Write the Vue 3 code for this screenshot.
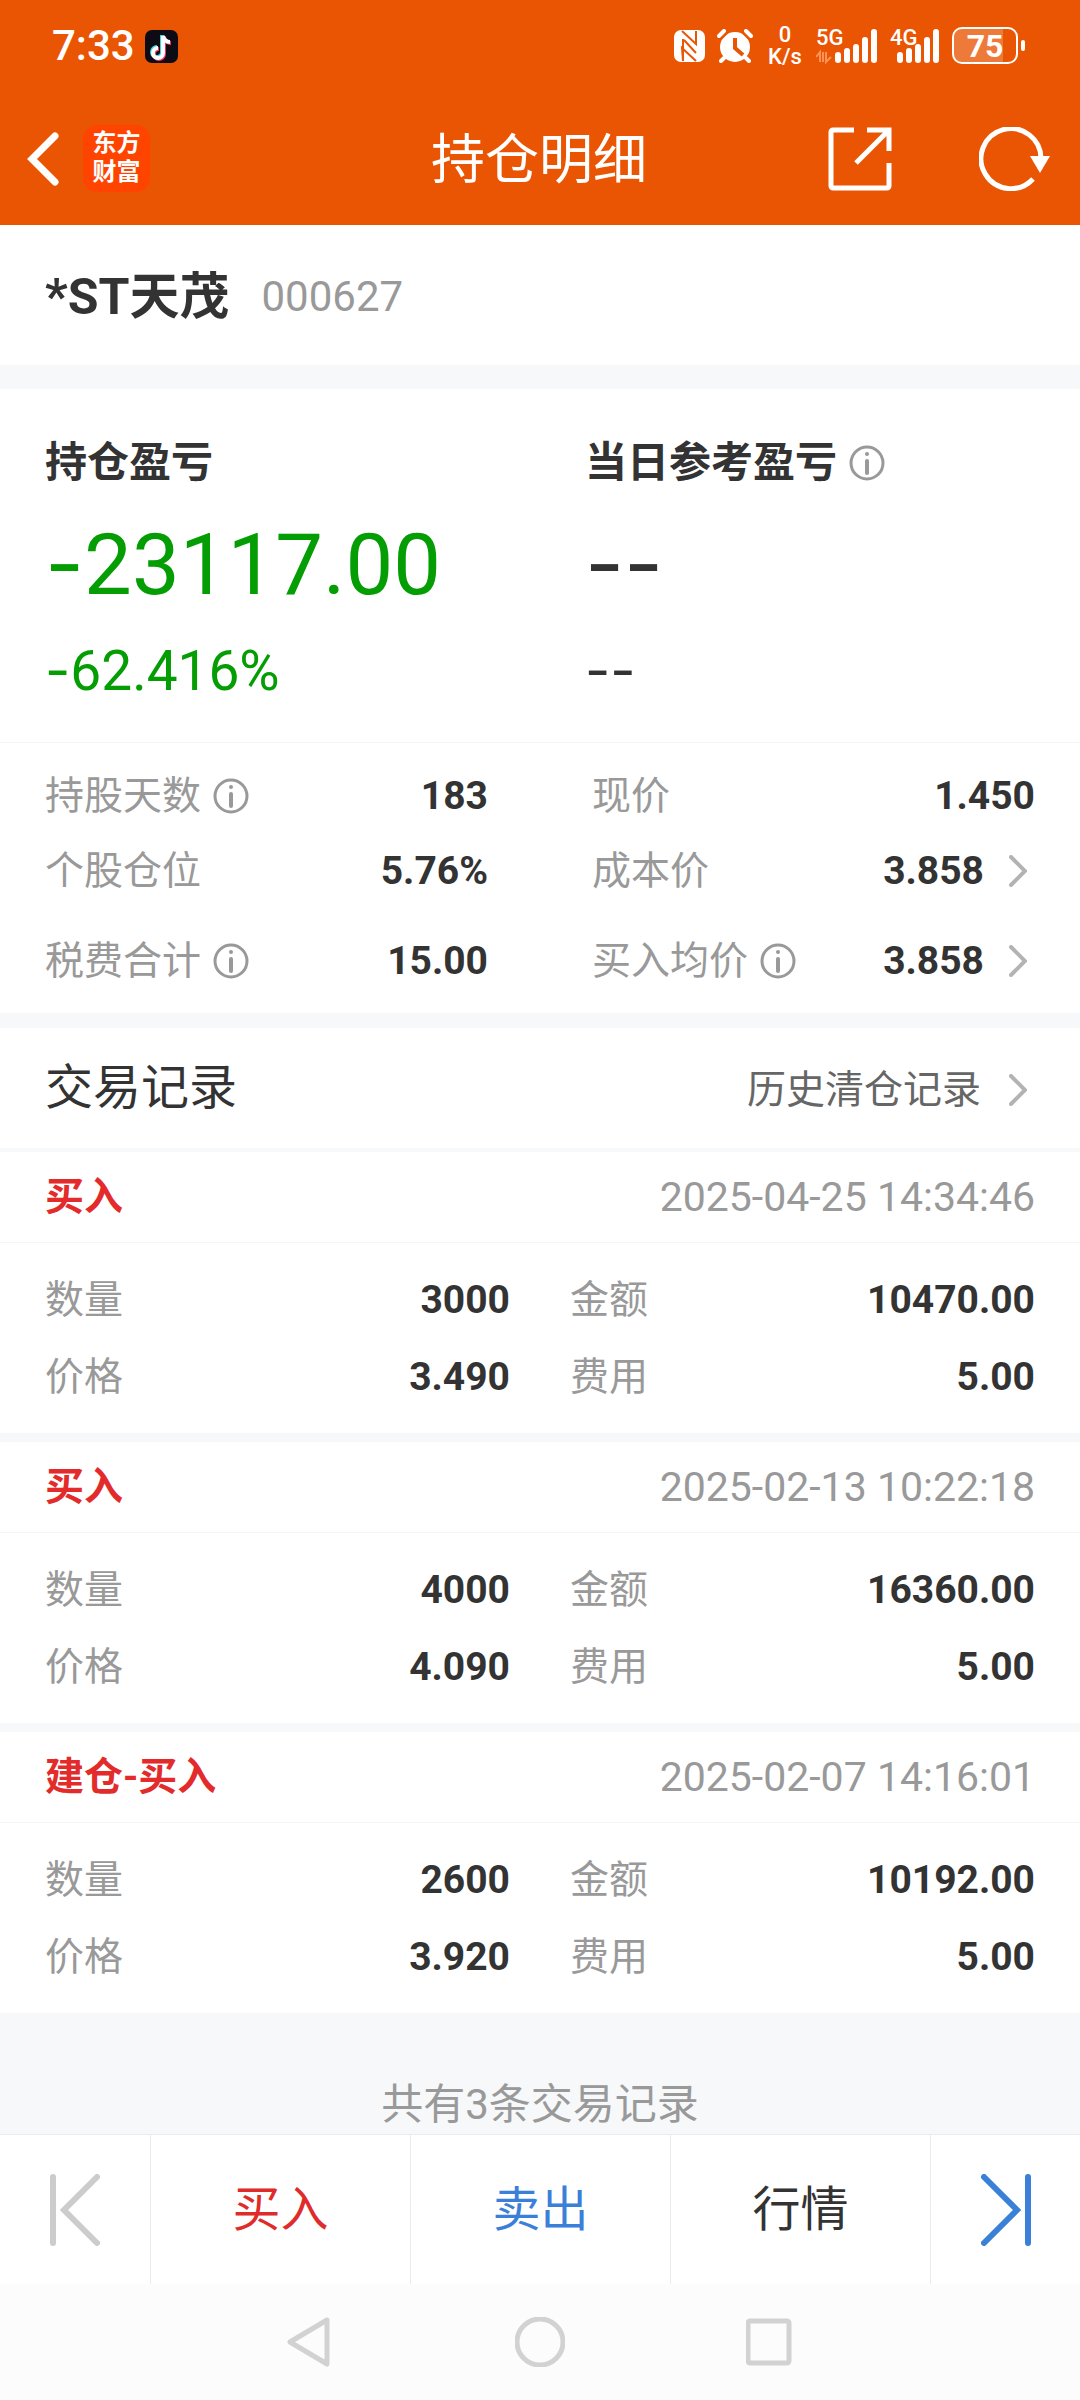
<script setup>
import { ref } from "vue";

const stock = { name: "*ST天茂", code: "000627" };

const leftStats = [
  { label: "持股天数", value: "183", info: true },
  { label: "个股仓位", value: "5.76%" },
  { label: "税费合计", value: "15.00", info: true },
];
const rightStats = [
  { label: "现价", value: "1.450" },
  { label: "成本价", value: "3.858", arrow: true },
  { label: "买入均价", value: "3.858", info: true, arrow: true },
];

const records = ref([
  { type: "买入", time: "2025-04-25 14:34:46", count: "3000", amount: "10470.00", price: "3.490", fee: "5.00" },
  { type: "买入", time: "2025-02-13 10:22:18", count: "4000", amount: "16360.00", price: "4.090", fee: "5.00" },
  { type: "建仓-买入", time: "2025-02-07 14:16:01", count: "2600", amount: "10192.00", price: "3.920", fee: "5.00" },
]);

// 信号格的顶部位置
const bars = [23, 19, 15, 8, 0];
</script>

<template>
  <div class="page">
    <header class="top">
      <div class="status">
        <div class="status-left">
          <span class="time">7:33</span>
          <svg class="tiktok" viewBox="0 0 33 33" aria-hidden="true">
            <rect width="33" height="33" rx="7" fill="#0d0b14" />
            <g fill="none" stroke-width="4">
              <path d="M17 5v17a5 5 0 1 1-5-5M17 6c1 4 3 6 7 6" stroke="#35d6dc" />
              <path d="M19 7v17a5 5 0 1 1-5-5M19 7c1 4 3 6 7 6" stroke="#f0335a" />
              <path d="M18 6v17a5 5 0 1 1-5-5M18 6c1 4 3 6 7 6" stroke="#fff" />
            </g>
          </svg>
        </div>
        <div class="status-right">
          <svg class="nfc" viewBox="0 0 31 32" aria-hidden="true">
            <rect width="31" height="32" rx="7" fill="#fff" />
            <path d="M8 1l14 13V1M10 10l12 13M9 9v22l-1-13 14 13" fill="none" stroke="#ea5503" stroke-width="2" />
          </svg>
          <svg class="alarm" viewBox="0 0 36 34" aria-hidden="true">
            <circle cx="18" cy="18" r="15" fill="#fff" />
            <path d="M2 7l5-5M34 7l-5-5M7 29l-3 3M29 29l3 3" fill="none" stroke="#fff" stroke-width="4" stroke-linecap="round" />
            <path d="M4 10l7-7M32 10l-7-7" fill="none" stroke="#ea5503" stroke-width="2" />
            <path d="M18 9v10l8 7" fill="none" stroke="#ea5503" stroke-width="4" />
          </svg>
          <div class="speed"><span>0</span><span>K/s</span></div>
          <svg class="signal first" viewBox="0 -8 62 50">
            <text x="0" y="16">5G</text>
            <path d="M4 33V23l-4 5M7 23v10M10 23v10l5-5" fill="none" stroke="#ff9257" stroke-width="2" />
            <rect v-for="(y, i) in bars" :key="i" :x="19 + i * 9" :y="y" width="6" :height="34 - y" rx="3" />
          </svg>
          <svg class="signal" viewBox="0 -8 50 50">
            <text x="0" y="16">4G</text>
            <rect v-for="(y, i) in bars" :key="i" :x="7 + i * 9" :y="y" width="6" :height="34 - y" rx="3" />
          </svg>
          <svg class="battery" viewBox="0 0 74 38">
            <path d="M10 2H51V36H10a8 8 0 0 1-8-8V10a8 8 0 0 1 8-8z" fill="#fff" opacity=".22" />
            <rect x="1" y="1" width="64" height="35" rx="9" fill="none" stroke="#fff" stroke-width="2" />
            <rect x="69" y="13" width="4" height="11" rx="2" fill="#fff" />
            <text x="33" y="30">75</text>
          </svg>
        </div>
      </div>
      <nav class="titlebar">
        <div class="nav-left">
          <button class="icon-btn" aria-label="返回">
            <svg class="back" viewBox="0 0 32 54"><path d="M28 4L5 27l23 23" /></svg>
          </button>
          <div class="logo">东方<br />财富</div>
        </div>
        <h1>持仓明细</h1>
        <div class="nav-right">
          <button class="icon-btn" aria-label="分享">
            <svg class="share" viewBox="0 0 64 64">
              <path d="M26 3H5a2 2 0 0 0-2 2V59a2 2 0 0 0 2 2H59a2 2 0 0 0 2-2V36M39 3H61V24M61 3L28 36" />
            </svg>
          </button>
          <button class="icon-btn" aria-label="刷新">
            <svg class="refresh" viewBox="0 0 72 64">
              <path d="M62 32A30 30 0 1 0 54 52" />
              <path class="head" d="M51 29H71L61 46z" />
            </svg>
          </button>
        </div>
      </nav>
    </header>

    <main>
      <section class="stock">
        <h2>{{ stock.name }}</h2>
        <span class="code">{{ stock.code }}</span>
      </section>

      <section class="profit">
        <div class="profit-col">
          <h3>持仓盈亏</h3>
          <p class="big down"><span class="dash">-</span>23117.00</p>
          <p class="small down"><span class="dash">-</span>62.416%</p>
        </div>
        <div class="profit-col">
          <h3>
            当日参考盈亏
            <svg class="info" viewBox="0 0 36 36">
              <circle cx="18" cy="18" r="16" />
              <path d="M18 16v12" /><path d="M18 9v0" />
            </svg>
          </h3>
          <p class="big"><span class="dash">--</span></p>
          <p class="small"><span class="dash">--</span></p>
        </div>
      </section>

      <section class="stats">
        <dl v-for="(list, n) in [leftStats, rightStats]" :key="n">
          <div v-for="item in list" :key="item.label" class="row">
            <dt>
              {{ item.label }}
              <svg v-if="item.info" class="info" viewBox="0 0 36 36">
                <circle cx="18" cy="18" r="16" />
                <path d="M18 16v12" /><path d="M18 9v0" />
              </svg>
            </dt>
            <dd>
              {{ item.value }}
              <svg v-if="item.arrow" class="arrow" viewBox="0 0 18 32"><path d="M2 2l14 14L2 30" /></svg>
            </dd>
          </div>
        </dl>
      </section>

      <section class="record-title">
        <h2>交易记录</h2>
        <a href="#">
          历史清仓记录
          <svg class="arrow" viewBox="0 0 18 32"><path d="M2 2l14 14L2 30" /></svg>
        </a>
      </section>

      <article v-for="r in records" :key="r.time" class="record">
        <div class="record-head">
          <strong>{{ r.type }}</strong>
          <time>{{ r.time }}</time>
        </div>
        <dl class="record-body">
          <div class="row"><dt>数量</dt><dd>{{ r.count }}</dd></div>
          <div class="row"><dt>金额</dt><dd>{{ r.amount }}</dd></div>
          <div class="row"><dt>价格</dt><dd>{{ r.price }}</dd></div>
          <div class="row"><dt>费用</dt><dd>{{ r.fee }}</dd></div>
        </dl>
      </article>

      <p class="total">共有{{ records.length }}条交易记录</p>
    </main>

    <footer>
      <div class="actions">
        <button class="prev" aria-label="上一个" disabled>
          <svg viewBox="0 0 50 72"><path d="M3 3v66M47 3L14 36l33 33" /></svg>
        </button>
        <button class="buy">买入</button>
        <button class="sell">卖出</button>
        <button>行情</button>
        <button class="next" aria-label="下一个">
          <svg viewBox="0 0 50 72"><path d="M47 3v66M3 3l33 33L3 69" /></svg>
        </button>
      </div>
      <div class="system">
        <button class="icon-btn" aria-label="系统返回">
          <svg viewBox="0 0 50 50"><path d="M43 3L6 25l37 22z" /></svg>
        </button>
        <button class="icon-btn" aria-label="主页">
          <svg viewBox="0 0 50 50"><circle cx="25" cy="25" r="23" /></svg>
        </button>
        <button class="icon-btn" aria-label="最近任务">
          <svg viewBox="0 0 50 50"><rect x="2" y="4" width="41" height="42" rx="2" /></svg>
        </button>
      </div>
    </footer>
  </div>
</template>

<style>
body {
  margin: 0;
  background: #f6f8fa;
}
</style>

<style scoped>
.page {
  display: flex;
  flex-direction: column;
  min-height: 100vh;
  color: #333;
  font-family: Roboto, "Noto Sans CJK SC", sans-serif;
  font-size: 39px;
  line-height: 60px;
}

h1, h2, h3, p, dl, dd {
  margin: 0;
}

button {
  padding: 0;
  border: none;
  background: none;
  color: inherit;
  font: inherit;
  cursor: pointer;
}

svg {
  display: block;
  flex: none;
}

.icon-btn {
  display: flex;
}

.top {
  background: #ea5503;
  color: #fff;
}

.status {
  display: flex;
  justify-content: space-between;
  align-items: center;
  height: 92px;
  padding: 0 54px 0 52px;
}

.status-left,
.status-right {
  display: flex;
  align-items: center;
}

.time {
  font-size: 42px;
  font-weight: 500;
}

.tiktok {
  width: 33px;
  height: 33px;
  margin-left: 10px;
}

.nfc {
  width: 31px;
  height: 32px;
}

.alarm {
  width: 36px;
  height: 34px;
  margin-left: 12px;
}

.speed {
  display: flex;
  flex-direction: column;
  align-items: center;
  width: 36px;
  margin: 0 13px 0 14px;
  font-size: 22px;
  font-weight: 500;
  line-height: 22px;
}

.signal {
  width: 50px;
  height: 50px;
  fill: #fff;
  font-size: 22px;
  font-weight: 500;
}

.signal.first {
  width: 62px;
  margin-right: 12px;
}

.battery {
  width: 74px;
  height: 38px;
  margin-left: 12px;
  fill: #fff;
  font-size: 32px;
  font-weight: 700;
  text-anchor: middle;
}

.titlebar {
  display: grid;
  grid-template-columns: 1fr auto 1fr;
  align-items: center;
  height: 133px;
  padding: 0 29px 0 27px;
}

.titlebar svg {
  fill: none;
  stroke: #fff;
  stroke-width: 5;
}

.titlebar h1 {
  padding-top: 4px;
  font-size: 54px;
  font-weight: 400;
}

.nav-left,
.nav-right {
  display: flex;
  align-items: center;
}

.nav-left {
  gap: 24px;
}

.nav-right {
  justify-content: flex-end;
  gap: 87px;
}

.titlebar .back {
  width: 32px;
  height: 54px;
  stroke-width: 7;
  stroke-linecap: round;
}

.logo {
  box-sizing: border-box;
  width: 67px;
  height: 67px;
  padding-top: 4px;
  border-radius: 14px;
  background: #ff4400;
  font-size: 24px;
  font-weight: 700;
  line-height: 29px;
  text-align: center;
}

.share {
  width: 64px;
  height: 64px;
}

.refresh {
  width: 72px;
  height: 64px;
}

.titlebar .refresh .head {
  fill: #fff;
  stroke: none;
}

.stock {
  display: flex;
  align-items: center;
  gap: 32px;
  height: 136px;
  padding: 4px 45px 0;
  border-bottom: 24px solid #f6f8fa;
  background: #fff;
}

.stock h2 {
  font-size: 50px;
  font-weight: 700;
}

.code {
  color: #999;
  font-size: 42px;
}

.profit {
  display: grid;
  grid-template-columns: 1fr 1fr;
  padding: 44px 0 41px;
  border-bottom: 1px solid #f4f5f6;
  background: #fff;
}

.profit-col {
  padding-left: 45px;
}

.profit h3 {
  display: flex;
  align-items: center;
  font-size: 42px;
  font-weight: 700;
}

.big {
  margin: 20px 0 24px;
  font-size: 85px;
  line-height: 104px;
}

.small {
  font-size: 55px;
}

.down {
  color: #049e04;
}

.dash {
  font-family: Inter, sans-serif;
  line-height: 1;
}

.info {
  width: 36px;
  height: 36px;
  margin-left: 12px;
  fill: none;
  stroke: #999;
  stroke-width: 3;
  stroke-linecap: round;
}

.info path {
  stroke-width: 4;
}

.arrow {
  width: 18px;
  height: 32px;
  margin: 0 8px 0 25px;
  fill: none;
  stroke: #b3b3b3;
  stroke-width: 4;
  stroke-linecap: round;
}

.stats {
  display: grid;
  grid-template-columns: 1fr 1fr;
  gap: 104px;
  padding: 23px 45px 22px;
  border-bottom: 15px solid #f6f8fa;
  background: #fff;
}

.row {
  display: flex;
  justify-content: space-between;
  align-items: center;
  height: 60px;
}

.stats .row + .row {
  margin-top: 15px;
}

.stats .row:last-child {
  margin-top: 30px;
}

dt,
dd {
  display: flex;
  align-items: center;
}

dt {
  color: #999;
}

dd {
  font-weight: 700;
}

.record-title {
  display: flex;
  justify-content: space-between;
  align-items: center;
  height: 120px;
  padding: 0 45px;
  border-bottom: 4px solid #f6f8fa;
  background: #fff;
}

.record-title h2 {
  font-size: 48px;
  font-weight: 400;
}

.record-title a {
  display: flex;
  align-items: center;
  gap: 3px;
  padding-top: 4px;
  color: #666;
  text-decoration: none;
}

.record {
  background: #fff;
}

.record + .record {
  border-top: 9px solid #f6f8fa;
}

.record-head {
  display: flex;
  justify-content: space-between;
  align-items: center;
  height: 90px;
  padding: 0 45px;
  border-bottom: 1px solid #f4f5f6;
}

.record-head strong {
  color: #e32b2b;
}

.record-head time {
  color: #999;
  font-size: 41px;
}

.record-body {
  display: grid;
  grid-template-columns: 1fr 1fr;
  gap: 17px 60px;
  padding: 27px 45px 26px;
}

.total {
  padding-top: 63px;
  color: #999;
  font-size: 42px;
  line-height: 58px;
  text-align: center;
}

footer {
  margin-top: auto;
}

.actions {
  display: grid;
  grid-template-columns: 150fr 260fr 260fr 260fr 150fr;
  height: 149px;
  border-top: 1px solid #ebebed;
  background: #fff;
  font-size: 48px;
}

.actions button + button {
  border-left: 1px solid #ebebed;
}

.actions svg {
  width: 50px;
  height: 72px;
  margin: 0 auto;
  fill: none;
  stroke: currentColor;
  stroke-width: 6;
  stroke-linecap: round;
}

.prev {
  color: #ccc;
}

.buy {
  color: #e02b2b;
}

.sell,
.next {
  color: #3a80d9;
}

.system {
  display: flex;
  justify-content: center;
  align-items: center;
  gap: 181px;
  height: 116px;
  background: #fcfcfc;
}

.system svg {
  width: 50px;
  height: 50px;
  fill: none;
  stroke: #d2d2d2;
  stroke-width: 5;
  stroke-linejoin: round;
}
</style>
